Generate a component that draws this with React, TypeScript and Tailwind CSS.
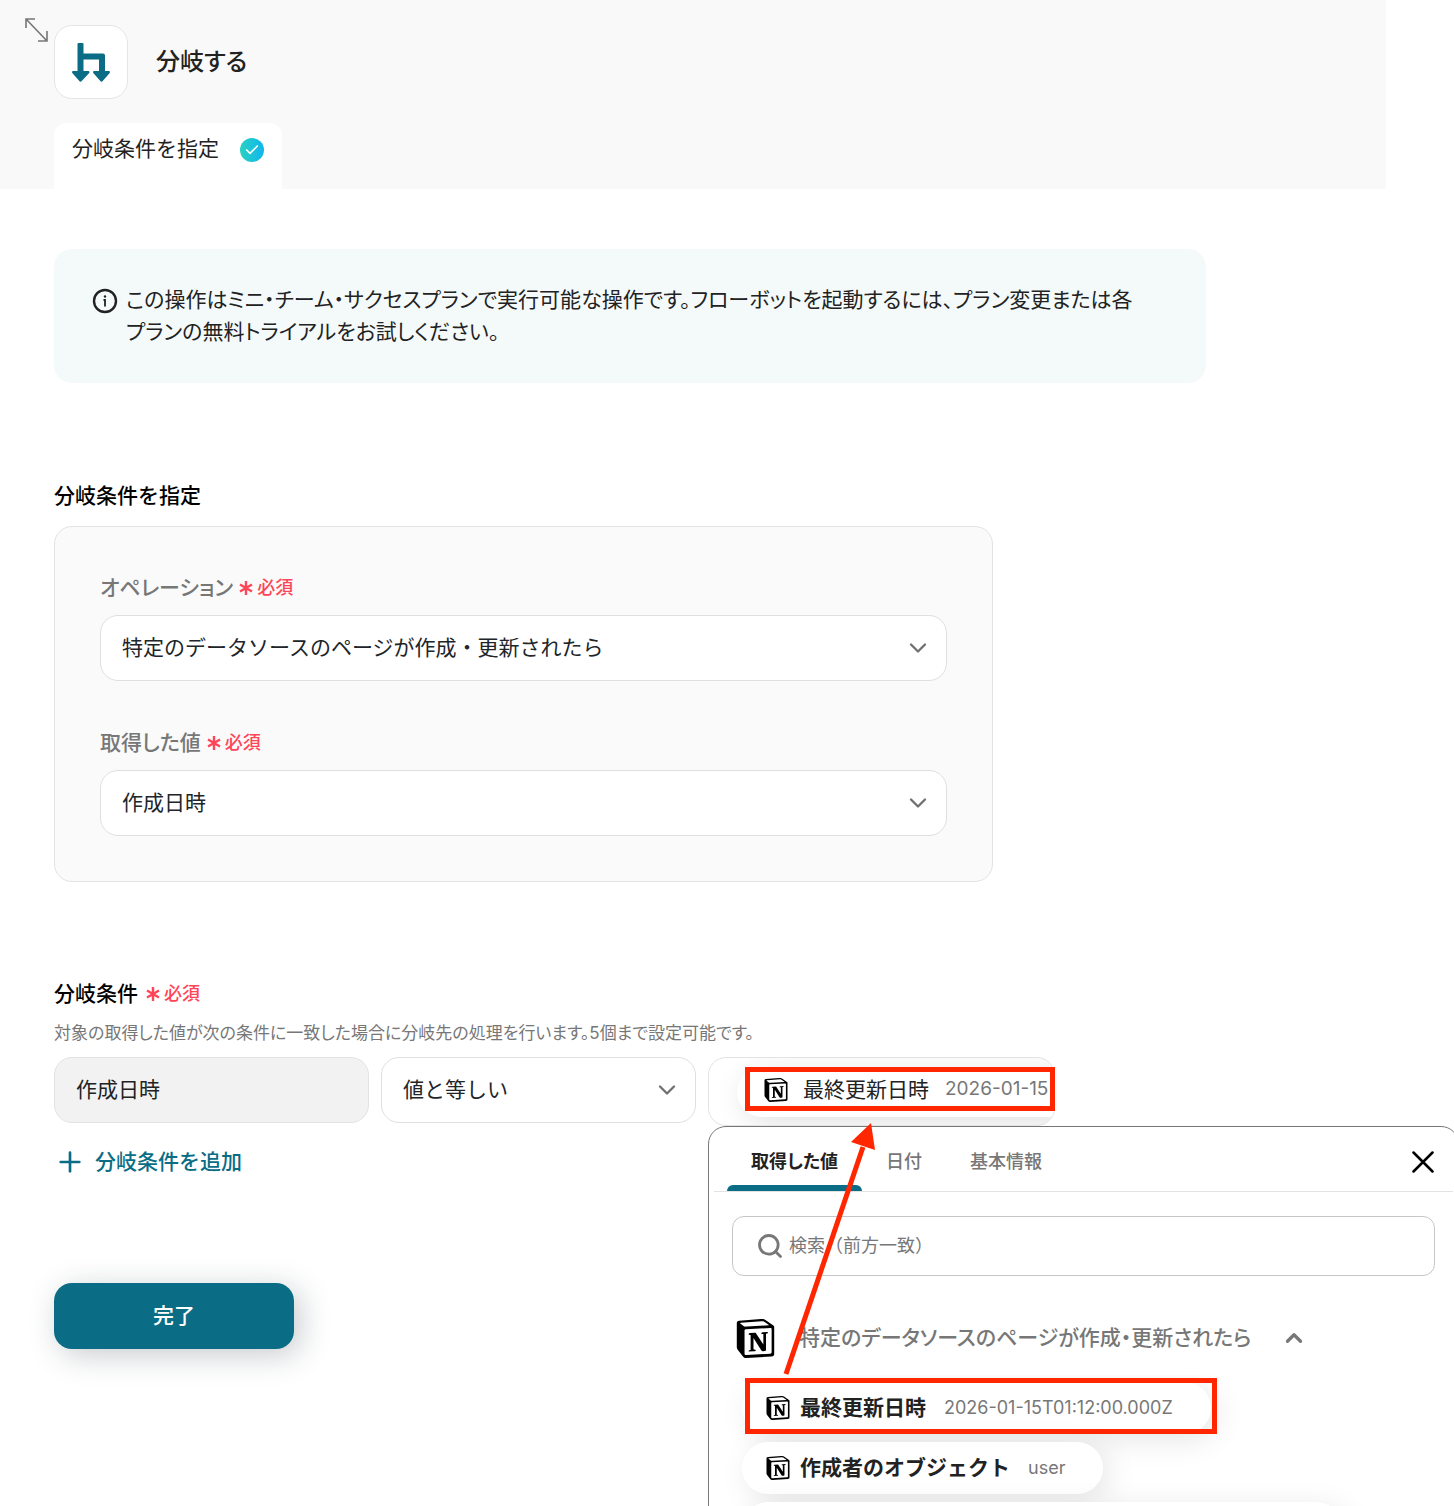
import { useState } from 'react';
import type { ReactNode } from 'react';
import { Check, ChevronDown, ChevronUp, Plus, Search } from 'lucide-react';
import { SiNotion } from 'react-icons/si';

const tabs = ['取得した値', '日付', '基本情報'];

const outputs = [
  { name: '最終更新日時', value: '2026-01-15T01:12:00.000Z' },
  { name: '作成者のオブジェクト', value: 'user' },
];

function BranchLogo() {
  return (
    <svg viewBox="0 0 38 39" className="h-[39px] w-[38px]" fill="#0a6c85" aria-hidden="true">
      <path d="M6.5 0h4a1 1 0 0 1 1 1v9.500H31a2 2 0 0 1 2 2V28h3.500c1.400 0 1.900 1.300 1 2.200l-6.800 7.900c-.7.8-1.700.8-2.400 0l-6.800-7.900c-.9-.9-.4-2.200 1-2.200H27V16.500H11.500V28H16c1.400 0 1.900 1.300 1 2.200l-7.300 7.900c-.7.8-1.700.8-2.400 0L.5 30.200c-.9-.9-.4-2.200 1-2.200h4V1a1 1 0 0 1 1-1z" />
    </svg>
  );
}

function ExpandIcon() {
  return (
    <svg viewBox="0 0 24 24" className="h-6 w-6" fill="none" stroke="#777" strokeWidth="1.6" aria-hidden="true">
      <path d="M2 10V1h9M2 1l21 22M23 13v10h-9" />
    </svg>
  );
}

function InfoIcon() {
  return (
    <svg viewBox="0 0 26 26" className="mt-1 h-[26px] w-[26px] shrink-0" fill="none" stroke="#222" aria-hidden="true">
      <circle cx="13" cy="13" r="11" strokeWidth="2.4" />
      <path d="M11.500 12H13v6.500" strokeWidth="1.800" />
      <circle cx="13" cy="8.500" r="1.200" fill="#222" stroke="none" />
    </svg>
  );
}

function Required() {
  return (
    <span className="flex items-center gap-1 text-lg font-medium text-[#ff4558]">
      <svg viewBox="0 0 14 14" className="h-3.5 w-3.5" fill="none" stroke="currentColor" strokeWidth="2.4" aria-hidden="true">
        <path d="M7 0v14M1 3.500l12 7M13 3.500l-12 7" />
      </svg>
      必須
    </span>
  );
}

interface SelectBoxProps {
  id: string;
  value: string;
  label?: string;
}

function SelectBox({ id, value, label }: SelectBoxProps) {
  return (
    <div className="relative">
      <select
        id={id}
        aria-label={label}
        className="h-[66px] w-full appearance-none rounded-[18px] border border-[#dedfe3] bg-white px-[21px] text-[21px] text-[#212529]"
      >
        <option>{value}</option>
      </select>
      <ChevronDown className="pointer-events-none absolute top-[19px] right-[15px] h-7 w-7 text-[#707070]" strokeWidth={2} />
    </div>
  );
}

interface FieldProps {
  id: string;
  title: string;
  children: ReactNode;
}

function Field({ id, title, children }: FieldProps) {
  return (
    <div>
      <div className="mb-[11px] flex items-center gap-1.5">
        <label htmlFor={id} className="text-[21px] leading-8 font-medium text-[#777] [font-feature-settings:'palt']">
          {title}
        </label>
        <Required />
      </div>
      {children}
    </div>
  );
}

function OutputPicker() {
  const [activeTab, setActiveTab] = useState(tabs[0]);

  return (
    <div className="absolute top-full left-0 z-10 h-[480px] w-[751px] rounded-t-[18px] border border-[#777] bg-white">
      {/* Tabs */}
      <div className="mx-[5px] flex items-center justify-between border-b border-[#e3e3e3] pr-[19px] pl-[13px]">
        <div className="flex [font-feature-settings:'palt']" role="tablist">
          {tabs.map((tab) => (
            <button
              key={tab}
              role="tab"
              aria-selected={tab === activeTab}
              onClick={() => setActiveTab(tab)}
              className={`relative h-16 px-6 pt-1.5 text-lg ${
                tab === activeTab ? 'font-bold text-[#222]' : 'font-medium text-[#777]'
              }`}
            >
              {tab}
              {tab === activeTab && (
                <span className="absolute inset-x-0 bottom-0 h-1.5 rounded-t-[6px] bg-[#0a6c85]" />
              )}
            </button>
          ))}
        </div>
        <button aria-label="閉じる" className="pt-1.5">
          <svg viewBox="0 0 22 22" className="h-[22px] w-[22px]" fill="none" stroke="#000" strokeWidth="2.5" strokeLinecap="round">
            <path d="M1.500 1.500l19 19M20.500 1.500l-19 19" />
          </svg>
        </button>
      </div>

      {/* Search */}
      <div className="mx-[23px] mt-6 flex h-[60px] items-center gap-[5px] rounded-xl border border-[#c6c6c6] px-[23px]">
        <Search className="h-7 w-7 shrink-0 text-[#777]" strokeWidth={2.4} />
        <input
          type="text"
          aria-label="検索"
          placeholder="検索（前方一致）"
          className="w-full text-lg outline-none placeholder:text-[#777]"
        />
      </div>

      {/* Outputs */}
      <button className="mt-[42px] ml-[27px] flex h-10 items-center text-[21px] font-medium text-[#777] [font-feature-settings:'palt']">
        <SiNotion className="h-[39px] w-[39px] shrink-0 text-black" />
        <span className="ml-6">特定のデータソースのページが作成・更新されたら</span>
        <ChevronUp className="ml-[30px] h-[26px] w-[26px] shrink-0" strokeWidth={3} />
      </button>
      <ul className="mt-[17px] flex flex-col items-start gap-2 overflow-hidden pt-[7px] pl-[33px]">
        {outputs.map((output) => (
          <li key={output.name}>
            <button className="flex h-[52px] items-center rounded-full bg-white pr-[38px] pl-6 shadow-[6px_6px_30px_rgba(0,0,0,0.1)]">
              <SiNotion className="h-6 w-6 text-black" />
              <span className="ml-2.5 text-[21px] font-bold text-[#222]">{output.name}</span>
              <span className="ml-[18px] text-lg text-[#777]">{output.value}</span>
            </button>
          </li>
        ))}
        <li className="h-[52px] w-[600px] rounded-full bg-white shadow-[6px_6px_30px_rgba(0,0,0,0.1)]" />
      </ul>
    </div>
  );
}

function Annotations() {
  return (
    <div className="pointer-events-none absolute inset-0 z-20">
      <div className="absolute top-[10px] left-[37px] h-11 w-[310px] border-[5px] border-[#ff2600]" />
      <div className="absolute top-[321px] left-[37px] h-14 w-[472px] border-[5px] border-[#ff2600]" />
      <svg viewBox="0 0 100 252" className="absolute top-[66px] left-[75px] h-[252px] w-[100px]" aria-hidden="true">
        <path d="M3 251L80 24" stroke="#ff2600" strokeWidth="5" />
        <path d="M88 0L92 27L68 19z" fill="#ff2600" />
      </svg>
    </div>
  );
}

export default function App() {
  return (
    <div className="relative min-h-screen overflow-hidden bg-white font-['Inter','Noto_Sans_CJK_JP',sans-serif] text-[#222]">
      <header className="max-w-[1386px] bg-[#f9f9f9] pt-[18px] pl-6">
        <div className="flex items-start gap-1.5">
          <button aria-label="拡大">
            <ExpandIcon />
          </button>
          <div className="mt-[7px] flex h-[74px] w-[74px] items-center justify-center rounded-[18px] border border-[#e5e5e5] bg-white">
            <BranchLogo />
          </div>
          <h1 className="mt-[26px] ml-[22px] text-2xl leading-9 font-medium [font-feature-settings:'palt']">分岐する</h1>
        </div>
        <button className="mt-6 ml-[30px] flex h-[66px] items-start gap-[21px] rounded-t-xl bg-white px-[18px] pt-2.5 text-[21px] leading-8">
          分岐条件を指定
          <span className="mt-[5px] flex h-6 w-6 items-center justify-center rounded-full bg-linear-to-r from-[#2bd1c0] to-[#12b5ee]">
            <Check className="h-4 w-4 text-white" strokeWidth={2.5} />
          </span>
        </button>
      </header>

      <main className="px-[54px]">
        <div className="mt-[60px] flex max-w-[1152px] gap-2 rounded-[18px] bg-[#f4fafa] py-[35px] pr-[60px] pl-[38px]">
          <InfoIcon />
          <p className="text-[21px] leading-8 [font-feature-settings:'palt']">
            この操作はミニ・チーム・サクセスプランで実行可能な操作です。フローボットを起動するには、プラン変更または各プランの無料トライアルをお試しください。
          </p>
        </div>

        <section className="mt-[97px]">
          <h2 className="text-[21px] leading-8 font-medium text-black">分岐条件を指定</h2>
          <div className="mt-3.5 flex max-w-[939px] flex-col gap-[46px] rounded-[18px] border border-[#e3e3e3] bg-[#fafafa] p-[45px]">
            <Field id="operation" title="オペレーション">
              <SelectBox id="operation" value="特定のデータソースのページが作成・更新されたら" />
            </Field>
            <Field id="output" title="取得した値">
              <SelectBox id="output" value="作成日時" />
            </Field>
          </div>
        </section>

        <section className="mt-24">
          <h2 className="flex items-center gap-2 text-[21px] leading-8 font-medium text-black">
            分岐条件
            <Required />
          </h2>
          <p className="mt-2.5 text-[17px] leading-[26px] text-[#777] [font-feature-settings:'palt']">
            対象の取得した値が次の条件に一致した場合に分岐先の処理を行います。5個まで設定可能です。
          </p>
          <div className="mt-[11px] grid max-w-[1001px] grid-cols-[315fr_315fr_347fr] items-start gap-3">
            <input
              type="text"
              aria-label="対象の値"
              defaultValue="作成日時"
              disabled
              className="h-[66px] w-full rounded-[18px] border border-[#e3e3e3] bg-[#f2f2f2] px-[21px] pb-1 text-[21px]"
            />
            <SelectBox id="comparison" label="条件" value="値と等しい" />
            <div className="relative">
              <div className="flex h-[69px] items-center overflow-hidden rounded-[18px] border border-[#e3e3e3] bg-white pl-7">
                <div className="flex h-[50px] shrink-0 items-center rounded-full bg-white pr-9 pb-1 pl-[27px] shadow-[6px_6px_30px_rgba(0,0,0,0.12)]">
                  <SiNotion className="h-6 w-6 text-black" />
                  <span className="ml-[15px] text-[21px] text-[#222]">最終更新日時</span>
                  <span className="ml-4 text-[19px] text-[#777]">2026-01-15</span>
                </div>
              </div>
              <OutputPicker />
              <Annotations />
            </div>
          </div>
          <button className="mt-5 flex items-center gap-[9px] text-[21px] leading-8 font-medium text-[#0a6c85]">
            <Plus className="h-8 w-8" strokeWidth={2} />
            分岐条件を追加
          </button>
        </section>

        <button className="mt-[105px] h-[66px] w-[240px] rounded-[18px] bg-[#0a6c85] text-[21px] font-medium text-white shadow-[6px_6px_30px_rgba(33,48,60,0.25)]">
          完了
        </button>
      </main>
    </div>
  );
}
